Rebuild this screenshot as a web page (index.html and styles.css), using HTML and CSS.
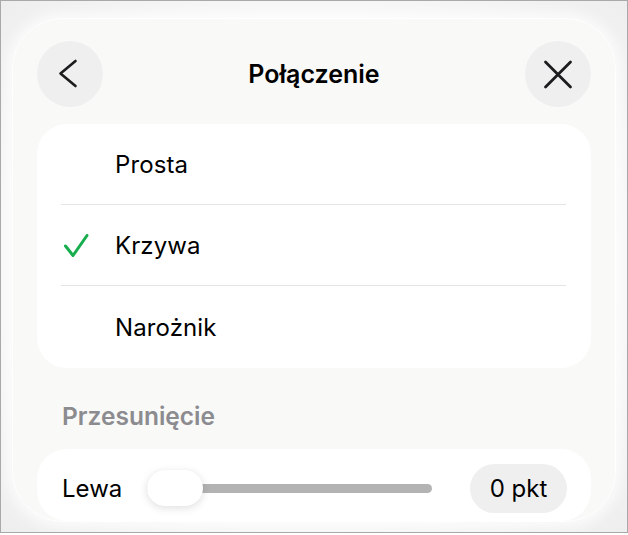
FILE: index.html
```html
<!DOCTYPE html>
<html lang="pl">
<head>
<meta charset="utf-8">
<title>Połączenie</title>
<link rel="stylesheet" href="styles.css">
</head>
<body>
<div class="frame">
  <div class="panel">
    <header class="header">
      <button class="round-btn" aria-label="Wstecz">
        <svg width="30" height="30" viewBox="0 0 30 30"><path d="M20.5 2 L5.5 14.5 L20.5 27" fill="none" stroke="#1c1c1e" stroke-width="2.6" stroke-linecap="round" stroke-linejoin="round"/></svg>
      </button>
      <h1 class="title">Połączenie</h1>
      <button class="round-btn" aria-label="Zamknij">
        <svg width="30" height="30" viewBox="0 0 30 30"><path d="M2.5 3 L27.5 28 M27.5 3 L2.5 28" fill="none" stroke="#1c1c1e" stroke-width="2.8" stroke-linecap="round"/></svg>
      </button>
    </header>

    <div class="card options">
      <div class="option"><span class="check-slot"></span><span class="label">Prosta</span></div>
      <div class="option"><span class="check-slot"><svg width="26" height="24" viewBox="0 0 26 24"><path d="M2.5 12 L10 21.5 L24 1.5" fill="none" stroke="#18ad4f" stroke-width="3" stroke-linecap="round" stroke-linejoin="round"/></svg></span><span class="label">Krzywa</span></div>
      <div class="option"><span class="check-slot"></span><span class="label">Narożnik</span></div>
    </div>

    <h2 class="section-title">Przesunięcie</h2>

    <div class="card slider-card">
      <span class="slider-label">Lewa</span>
      <div class="slider">
        <div class="track"></div>
        <div class="thumb"></div>
      </div>
      <span class="value-pill">0 pkt</span>
    </div>
  </div>
</div>
</body>
</html>
```

FILE: styles.css
```css
* { box-sizing: border-box; }

html, body {
  margin: 0;
  padding: 0;
  background: #ffffff;
}

body {
  width: 628px;
  height: 535px;
  font-family: Inter, "Noto Sans", "Liberation Sans", sans-serif;
  color: #000;
}

.frame {
  width: 628px;
  height: 533px;
  border: 1px solid #a9a9a9;
  background: radial-gradient(ellipse at 50% 50%, #fbfbfb 55%, #eeeeee 100%);
  padding: 17px 11px 0 11px;
  overflow: hidden;
}

.panel {
  width: 604px;
  height: 504px;
  background: #f9f9f8;
  border: 1px solid #ffffff;
  border-radius: 50px;
  box-shadow: 0 0 14px 4px rgba(255, 255, 255, 0.8), 0 0 2px rgba(0, 0, 0, 0.04);
  padding: 22px 24px 0 24px;
  overflow: hidden;
}

.header {
  display: flex;
  align-items: center;
  justify-content: space-between;
  height: 66px;
}

.round-btn {
  width: 66px;
  height: 66px;
  border: none;
  border-radius: 50%;
  background: #efefef;
  padding: 0;
  display: flex;
  align-items: center;
  justify-content: center;
}

.title {
  margin: 0;
  font-size: 25px;
  font-weight: 600;
  letter-spacing: 0;
}

.card {
  background: #ffffff;
  border-radius: 30px;
}

.options {
  margin-top: 17px;
  height: 244px;
  padding: 0 25px 0 24px;
}

.option {
  display: flex;
  align-items: center;
  height: 81px;
  border-bottom: 1px solid #e4e4e6;
}

.option:last-child {
  border-bottom: none;
  height: 82px;
}

.check-slot {
  width: 54px;
  display: flex;
  align-items: center;
  padding-left: 2px;
  padding-top: 2px;
}

.label {
  font-size: 24px;
  font-weight: 400;
  letter-spacing: 0.1px;
}

.section-title {
  margin: 0;
  height: 81px;
  padding: 34px 0 0 25px;
  font-size: 24.5px;
  line-height: 29px;
  font-weight: 600;
  color: #8c8c90;
}

.slider-card {
  height: 72px;
  display: flex;
  align-items: flex-start;
  padding: 15px 24px 8px 25px;
}

.slider-label {
  font-size: 24px;
  line-height: 49px;
  width: 85px;
}

.slider {
  position: relative;
  width: 285px;
  height: 49px;
  display: flex;
  align-items: center;
}

.track {
  width: 100%;
  height: 9px;
  border-radius: 5px;
  background: #b3b3b3;
}

.thumb {
  position: absolute;
  left: 0;
  top: 6px;
  width: 56px;
  height: 36px;
  border-radius: 18px;
  background: #ffffff;
  box-shadow: 0 2px 8px rgba(0, 0, 0, 0.13), 0 0 1px rgba(0, 0, 0, 0.05);
}

.value-pill {
  margin-left: auto;
  width: 97px;
  height: 49px;
  border-radius: 25px;
  background: #efeff0;
  display: flex;
  align-items: center;
  justify-content: center;
  font-size: 24px;
}
```
